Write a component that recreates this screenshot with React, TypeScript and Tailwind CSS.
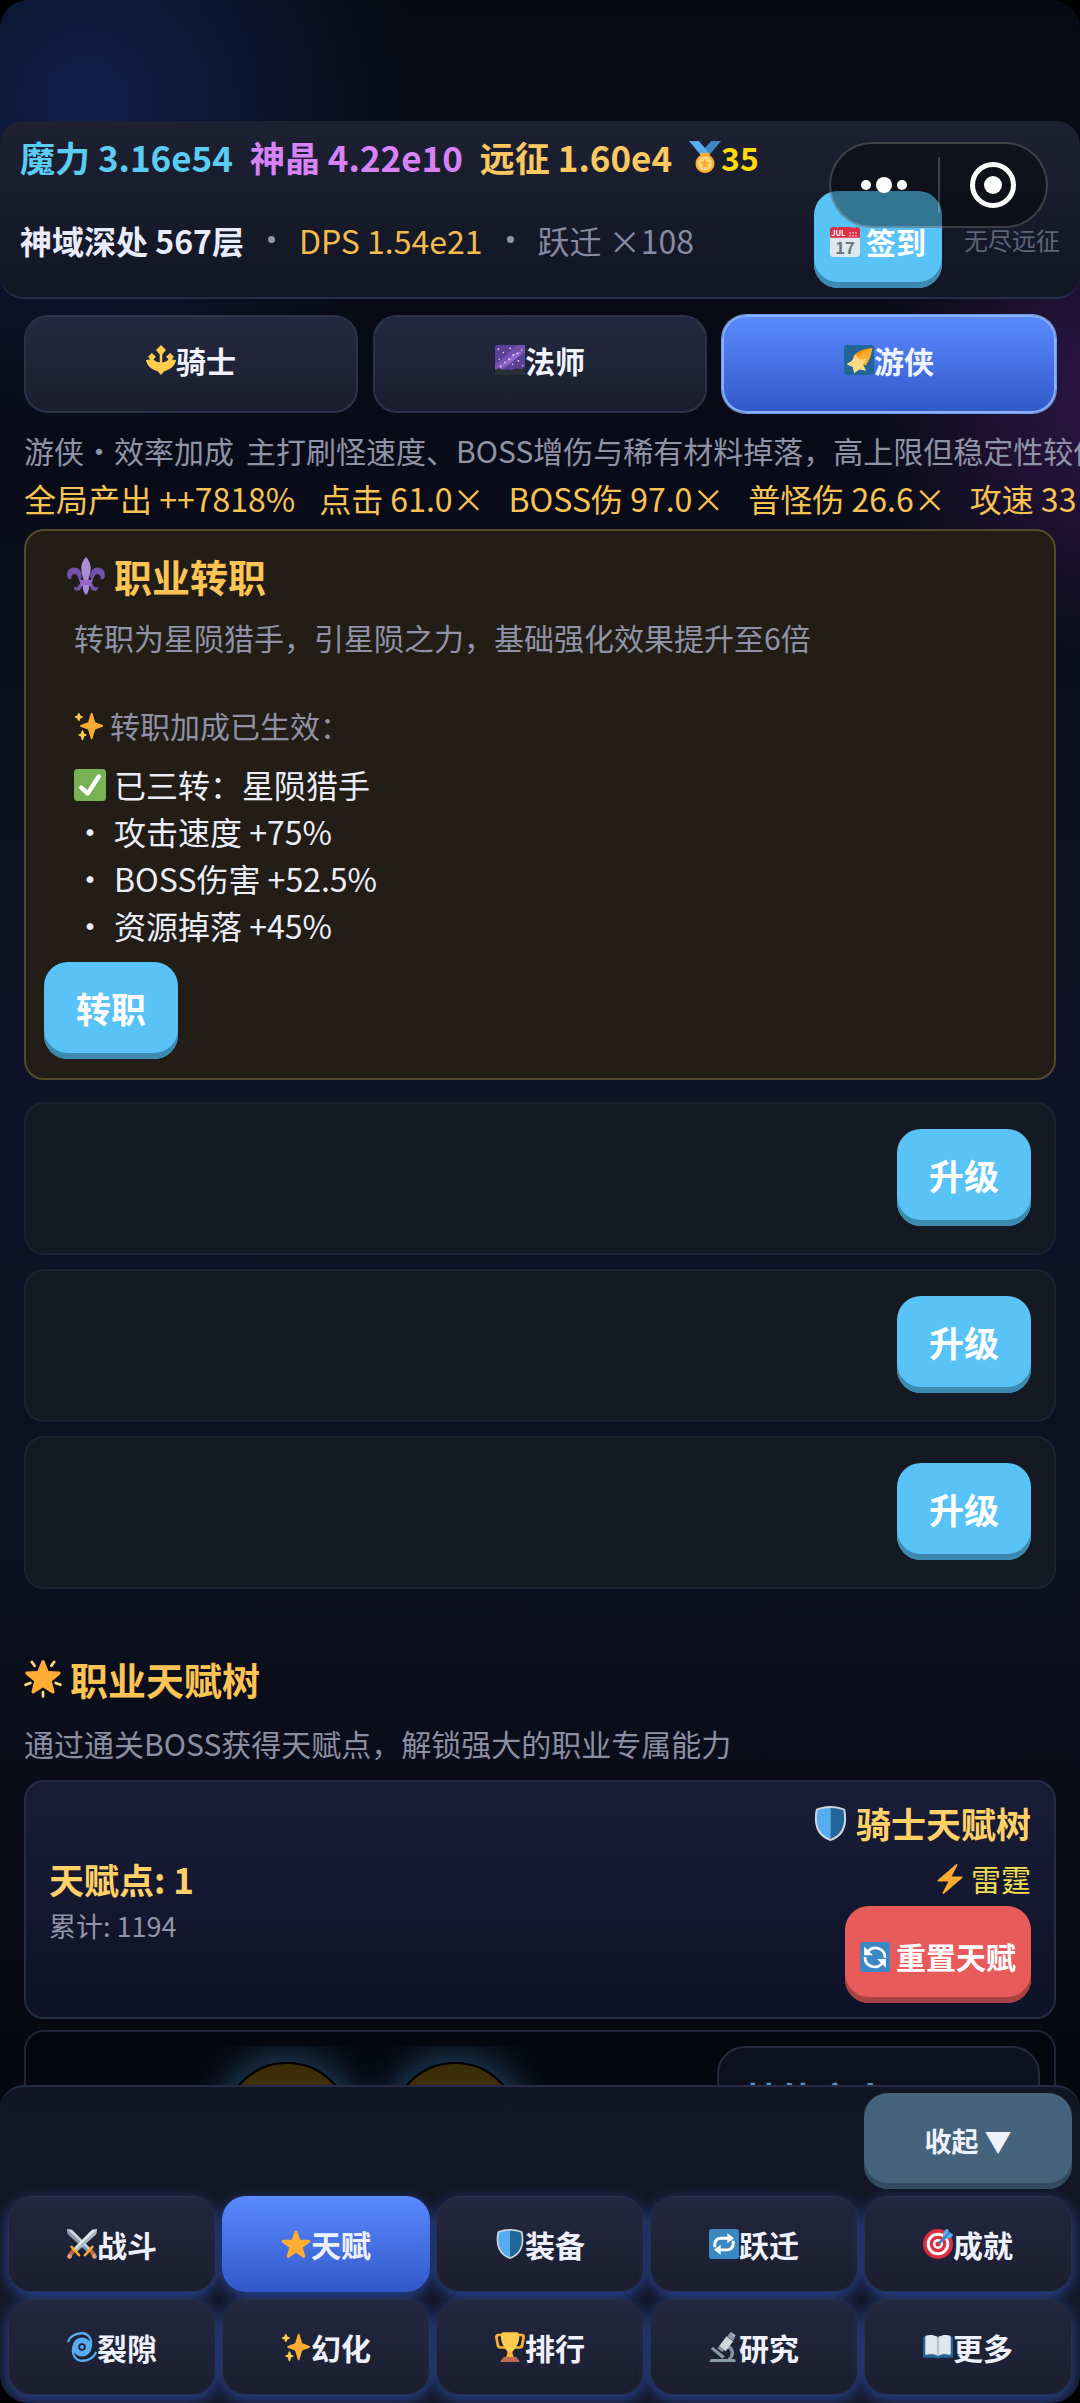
import type { ReactNode } from "react";
import clsx from "clsx";

type IconProps = { className?: string };

function Glyph({ className, children }: { className?: string; children: ReactNode }) {
  return (
    <svg viewBox="0 0 36 36" aria-hidden="true" className={clsx("h-[1em] w-[1em] shrink-0", className)}>
      {children}
    </svg>
  );
}

const MedalIcon = (p: IconProps) => (
  <Glyph {...p}>
    <path fill="#55ACEE" d="M18 8l-7-8H0l14 17 11.521-4.750z" />
    <path fill="#3B88C3" d="M25 0l-7 8 5.390 7.312 1.227-1.489L36 0z" />
    <path fill="#FFAC33" d="M23.205 16.026c.08-.217.131-.448.131-.693 0-1.104-.896-2-2-2h-6.667c-1.105 0-2 .896-2 2 0 .245.05.476.131.693-3.258 1.826-5.464 5.307-5.464 9.307C7.336 31.224 12.111 36 18.002 36s10.667-4.776 10.667-10.667c0-4-2.206-7.481-5.464-9.307z" />
    <circle fill="#FFD983" cx="18" cy="25.400" r="8" />
    <path fill="#FFAC33" d="M18 19.200l1.700 4.100 4.400.3-3.400 2.900 1.100 4.300-3.800-2.300-3.800 2.300 1.100-4.300-3.400-2.900 4.400-.3z" />
  </Glyph>
);

const CalendarIcon = (p: IconProps) => (
  <Glyph {...p}>
    <path fill="#E0E7EC" d="M36 32c0 2.209-1.791 4-4 4H4c-2.209 0-4-1.791-4-4V9c0-2.209 1.791-4 4-4h28c2.209 0 4 1.791 4 4v23z" />
    <path fill="#DD2E44" d="M4 0h4l1 2 1-2h16l1 2 1-2h1l1 2 1-2h1a4 4 0 0 1 4 4v9H0V4a4 4 0 0 1 4-4z" />
    <path fill="#F4ABBA" d="M23 6h2v2h-2zm3.500 0h2v2h-2zm3.500 0h2v2h-2zM23 9.500h2v2h-2zm3.500 0h2v2h-2zm3.500 0h2v2h-2z" />
    <text x="1.500" y="11" fontSize="9" fontWeight="700" fill="#fff">JUL</text>
    <text x="18" y="32" fontSize="20" fontWeight="700" fill="#66757F" textAnchor="middle">17</text>
  </Glyph>
);

const TridentIcon = (p: IconProps) => (
  <Glyph {...p}>
    <path fill="#FFCC4D" d="M18 0l6 6-4.500 5.500V21c3-.5 6-2 7.500-4l-3-3 5-4.500L33.500 14 31 17.500l5 .5c-1 8-8 11.500-14 13.500L18 36l-4-4.500C8 29.500 1 26 0 18l5-.5L2.500 14 7 9.500l5 4.500-3 3c1.500 2 4.500 3.500 7.500 4v-9.500L12 6z" />
  </Glyph>
);

const GalaxyIcon = (p: IconProps) => (
  <Glyph {...p}>
    <rect width="36" height="36" rx="3" fill="#5C3F96" />
    <path fill="#7450B0" d="M0 22C9 19 15 8 27 0h9v10C24 14 17 28 4 31H0z" />
    <path fill="#9266CC" d="M6 23c7-2 12-10 20-14 5-3 7-1 4 3-5 6-14 12-22 14-5 1-6-2-2-3z" />
    <g fill="#E9DDFB">
      <circle cx="4" cy="5" r="1" />
      <circle cx="10" cy="9" r=".9" />
      <circle cx="18" cy="4" r="1.100" />
      <circle cx="22" cy="12" r="1.200" />
      <circle cx="27" cy="10" r="1.100" />
      <circle cx="32" cy="6" r=".9" />
      <circle cx="17" cy="17" r="1.200" />
      <circle cx="12" cy="21" r="1" />
      <circle cx="5" cy="17" r=".9" />
      <circle cx="7" cy="26" r="1" />
      <circle cx="21" cy="23" r=".9" />
      <circle cx="28" cy="19" r="1.100" />
      <circle cx="33" cy="25" r=".9" />
    </g>
    <path fill="#292F33" d="M0 30l5-2 4 2 5-1 6 1 5-2 6 1 5-2v6a3 3 0 0 1-3 3H3a3 3 0 0 1-3-3z" />
  </Glyph>
);

const ShootingStarIcon = (p: IconProps) => (
  <Glyph {...p}>
    <rect width="36" height="36" rx="4" fill="#226699" />
    <path fill="#F4900C" d="M34 4C25 4 16 7 11 14l4 7 9 3z" />
    <path fill="#FFAC33" d="M34 4c-1 8-4 15-8 21L14 17c5-6 12-11 20-13z" />
    <path fill="#FFD983" d="M14 11l4.500 6.500 8.500-1-4 7 3.500 7.500-8-1.500L12 34l-1.500-7.500L3 23l6.500-4z" />
  </Glyph>
);

const FleurIcon = (p: IconProps) => (
  <Glyph {...p}>
    <path fill="#7450A8" d="M14 19c0-6-3-9-7-9-4.500 0-7 3.500-7 7 0 3 2 4.500 4 4 0-3 1-5 3-5 3 0 4 4 5 8zM22 19c0-6 3-9 7-9 4.500 0 7 3.500 7 7 0 3-2 4.500-4 4 0-3-1-5-3-5-3 0-4 4-5 8z" />
    <path fill="#7450A8" d="M15 25c-1 5-3 7-5 7-2.500 0-4-2-3-4 2 2 4 0 6-4zm6 0c1 5 3 7 5 7 2.500 0 4-2 3-4-2 2-4 0-6-4z" />
    <path fill="#AA8DD8" d="M18 0c3 3 4.500 7 4.500 11 0 5-2 8-2.500 12h-4c-.5-4-2.500-7-2.500-12C13.500 7 15 3 18 0z" />
    <path fill="#9266CC" d="M12 21.500h12l-1 6H13z" />
    <path fill="#AA8DD8" d="M15 27h6c0 4-1 7-3 9-2-2-3-5-3-9z" />
  </Glyph>
);

const SparklesIcon = (p: IconProps) => (
  <Glyph {...p}>
    <path fill="#FFAC33" d="M34.347 16.893l-8.899-3.294-3.323-10.891c-.128-.42-.517-.708-.956-.708-.439 0-.828.288-.956.708l-3.322 10.891-8.900 3.294c-.393.146-.653.519-.653.938 0 .418.260.793.653.938l8.895 3.293 3.324 11.223c.126.424.516.715.959.715.442 0 .833-.291.959-.716l3.324-11.223 8.896-3.293c.391-.144.652-.518.652-.937 0-.418-.261-.792-.653-.938z" />
    <path fill="#FFCC4D" d="M14.347 27.894l-2.314-.856-.9-3.300c-.118-.436-.513-.738-.964-.738-.451 0-.846.302-.965.737l-.9 3.300-2.313.856c-.393.146-.653.520-.653.938 0 .418.260.793.653.938l2.301.853.907 3.622c.112.444.511.756.970.756.459 0 .858-.312.970-.757l.907-3.622 2.301-.853c.393-.144.653-.519.653-.937 0-.418-.260-.793-.653-.937zM10.009 6.231l-2.364-.875-.876-2.365c-.145-.393-.519-.653-.938-.653-.418 0-.792.260-.938.653l-.875 2.365-2.365.875c-.393.146-.653.520-.653.938 0 .418.260.793.653.938l2.365.875.875 2.365c.146.393.520.653.938.653.418 0 .792-.260.938-.653l.875-2.365 2.365-.875c.393-.146.653-.520.653-.938 0-.418-.260-.792-.653-.938z" />
  </Glyph>
);

const CheckIcon = (p: IconProps) => (
  <Glyph {...p}>
    <rect width="36" height="36" rx="4" fill="#77B255" />
    <path fill="#FFF" d="M29.280 6.362a2.502 2.502 0 0 0-3.458.736L14.936 23.877l-5.029-4.650a2.500 2.500 0 1 0-3.394 3.671l7.209 6.666c.480.445 1.090.665 1.696.665.673 0 1.534-.282 2.099-1.139.332-.506 12.500-19.270 12.500-19.270a2.500 2.500 0 0 0-.737-3.458z" />
  </Glyph>
);

const GlowStarIcon = (p: IconProps) => (
  <Glyph {...p}>
    <path fill="#FFAC33" d="M18 0c.7 0 1.200.4 1.500 1.100l3.700 9.300 10 .6c1.500.1 2 1.800.9 2.700l-7.700 6.400 2.500 9.700c.3 1.400-1.100 2.400-2.300 1.600L18 26.100l-8.600 5.300c-1.200.8-2.600-.2-2.300-1.600l2.500-9.700-7.700-6.400c-1.100-.9-.6-2.600.9-2.700l10-.6 3.700-9.300C16.800.4 17.300 0 18 0z" />
    <g stroke="#FFD983" strokeWidth="2.600" strokeLinecap="round">
      <path d="M7.500 1.800l2.500 3.700M28.500 1.800L26 5.500M1.500 23.500l4.500-1.800M34.500 23.500L30 21.700M18 30.500v4" />
    </g>
  </Glyph>
);

const ShieldIcon = (p: IconProps) => (
  <Glyph {...p}>
    <path fill="#CCD6DD" d="M33 3c-7-3-15-3-15-3S10 0 3 3C0 18 3 31 18 36c15-5 18-18 15-33z" />
    <path fill="#55ACEE" d="M18 33.884C6.412 29.729 1.961 19.831 4.760 4.444 11.063 2.029 17.928 2 18 2z" />
    <path fill="#226699" d="M31.240 4.443C24.963 2.004 18.137 2 18.070 2H18v31.884c11.589-4.155 16.040-14.053 13.240-29.441z" />
  </Glyph>
);

const BoltIcon = (p: IconProps) => (
  <Glyph {...p}>
    <path fill="#FFAC33" d="M32.938 15.651C32.792 15.260 32.418 15 32 15H19.925L26.890 1.458c.219-.426.106-.947-.271-1.243C26.437.071 26.218 0 26 0c-.233 0-.466.082-.653.243L18 6.588 3.347 19.243c-.316.273-.430.714-.284 1.105S3.582 21 4 21h12.075L9.110 34.542c-.219.426-.106.947.271 1.243.182.144.401.215.619.215.233 0 .466-.082.653-.243L18 29.412l14.653-12.655c.317-.273.430-.714.285-1.106z" />
  </Glyph>
);

const ResetIcon = (p: IconProps) => (
  <Glyph {...p}>
    <rect width="36" height="36" rx="4" fill="#3B88C3" />
    <g fill="none" stroke="#fff" strokeWidth="3.200">
      <path d="M9.500 11.500A11.500 11.500 0 0 1 30 19" />
      <path d="M26.500 25.500A11.500 11.500 0 0 1 6 18" />
    </g>
    <path fill="#fff" d="M5 5.500V16h10.500zM31 31V20.500H20.500z" />
  </Glyph>
);

const RepeatIcon = (p: IconProps) => (
  <Glyph {...p}>
    <rect width="36" height="36" rx="4" fill="#3B88C3" />
    <g fill="none" stroke="#fff" strokeWidth="3.500">
      <path d="M7 22v-4a7 7 0 0 1 7-7h9" />
      <path d="M29 14v4a7 7 0 0 1-7 7h-9" />
    </g>
    <path fill="#fff" d="M22 5v12l8-6zM14 31V19l-8 6z" />
  </Glyph>
);

const SwordsIcon = (p: IconProps) => (
  <Glyph {...p}>
    <path fill="#CCD6DD" d="M0 0l6 1 22 22-4 4L1 6z" />
    <path fill="#8899A6" d="M0 0l26 25-2 2L1 6z" />
    <path fill="#E1E8ED" d="M36 0l-6 1L8 23l4 4L35 6z" />
    <path fill="#AAB8C2" d="M36 0L10 25l2 2L35 6z" />
    <path fill="#BE6B3F" d="M26 26l3-3 6 7-4 4zM10 26l-3-3-6 7 4 4z" />
    <circle cx="33" cy="33" r="2.800" fill="#DA9F83" />
    <circle cx="3" cy="33" r="2.800" fill="#DA9F83" />
    <path stroke="#FFAC33" strokeWidth="3" strokeLinecap="round" d="M21.500 31.500l9-10M14.500 31.500l-9-10" />
  </Glyph>
);

const StarIcon = (p: IconProps) => (
  <Glyph {...p}>
    <path fill="#FFAC33" d="M27.287 34.627c-.404 0-.806-.124-1.152-.371L18 28.422l-8.135 5.834a1.970 1.970 0 0 1-2.312-.008 1.971 1.971 0 0 1-.721-2.194l3.034-9.792-8.062-5.681a1.980 1.980 0 0 1-.708-2.203 1.978 1.978 0 0 1 1.866-1.363L12.947 13l3.179-9.549a1.976 1.976 0 0 1 3.749 0L23 13l10.036.015a1.975 1.975 0 0 1 1.159 3.566l-8.062 5.681 3.034 9.792a1.970 1.970 0 0 1-.720 2.194 1.957 1.957 0 0 1-1.160.379z" />
  </Glyph>
);

const TargetIcon = (p: IconProps) => (
  <Glyph {...p}>
    <circle fill="#DD2E44" cx="18" cy="18" r="18" />
    <circle fill="#FFF" cx="18" cy="18" r="13.500" />
    <circle fill="#DD2E44" cx="18" cy="18" r="10" />
    <circle fill="#FFF" cx="18" cy="18" r="6" />
    <circle fill="#DD2E44" cx="18" cy="18" r="3" />
    <path fill="#55ACEE" d="M24.016 6.981c-.403 2.079 0 4.691 0 4.691l7.054-7.388c.291-1.454-.528-3.932-1.718-4.238-1.190-.306-4.079.803-5.336 6.935zm5.003 5.003c-2.079.403-4.691 0-4.691 0l7.388-7.054c1.454-.291 3.932.528 4.238 1.718.306 1.190-.803 4.079-6.935 5.336z" />
    <path fill="#3A87C2" d="M32.798 4.485L21.176 17.587c-.362.362-1.673.882-2.510.046-.836-.836-.419-2.080-.057-2.443L31.815 3.501s.676-.635 1.159-.152-.176 1.136-.176 1.136z" />
  </Glyph>
);

const CycloneIcon = (p: IconProps) => (
  <Glyph {...p}>
    <circle cx="18" cy="18" r="8" fill="none" stroke="#55ACEE" strokeWidth="7" />
    <circle cx="18" cy="18" r="2.400" fill="#55ACEE" />
    <g fill="none" stroke="#55ACEE" strokeWidth="2.800" strokeLinecap="round">
      <path d="M1.500 11C4 5 11 1.500 18 1.500c8 0 13 8 10 17" />
      <path d="M34.500 25c-2.500 6-9.500 9.500-16.500 9.500-8 0-13-8-10-17" />
    </g>
  </Glyph>
);

const TrophyIcon = (p: IconProps) => (
  <Glyph {...p}>
    <path fill="#FFAC33" d="M5.123 5h6C12.227 5 13 4.896 13 6V4c0-1.104-.773-2-1.877-2h-8c-2 0-3.583 2.125-3 5 0 0 1.791 9.375 1.917 9.958C2.373 18.500 4.164 20 6.081 20h6.958c1.105 0-.039-1.896-.039-3v-2c0 1.104-.773 2-1.877 2h-4c-1.104 0-1.833-1.042-2-2S3.539 7.667 3.539 7.667C3.206 5.750 4.018 5 5.123 5zm25.812 0h-6C23.831 5 22 4.896 22 6V4c0-1.104 1.831-2 2.935-2h8c2 0 3.584 2.125 3 5 0 0-1.633 9.419-1.771 10-.354 1.500-2.042 3-4 3h-7.146C21.914 20 22 18.104 22 17v-2c0 1.104 1.831 2 2.935 2h4c1.104 0 1.834-1.042 2-2s1.584-7.333 1.584-7.333C32.851 5.750 32.040 5 30.935 5zM20.832 22c0-6.958-2.709 0-2.709 0s-3-6.958-3 0-3.291 10-3.291 10h12.292c-.001 0-3.292-3.042-3.292-10z" />
    <path fill="#FFCC4D" d="M29.123 6.577c0 6.775-6.770 18.192-11 18.192-4.231 0-11-11.417-11-18.192 0-5.195 1-6.319 3-6.319 1.374 0 6.025-.027 8-.027l7-.001c2.917-.001 4 .684 4 6.347z" />
    <path fill="#C1694F" d="M27 33c0 1.104.227 2-.877 2h-16C9.018 35 9 34.104 9 33v-1c0-1.104 1.164-2 2.206-2h13.917c1.042 0 1.877.896 1.877 2v1zM7 36v-1.600C7 33.600 7.700 33 8.500 33h19.200c.8 0 1.300.6 1.300 1.400V36z" />
  </Glyph>
);

const MicroscopeIcon = (p: IconProps) => (
  <Glyph {...p}>
    <path fill="#8899A6" d="M22 15c6 2 8 6 8 10 0 5-3 8-6 9h-4c4-2 6-5 6-9 0-3-2-5-6-6z" />
    <path fill="#8899A6" d="M3 32.500h27a2 2 0 0 1 2 2V36H1v-1.500a2 2 0 0 1 2-2zM2 20l3-2 14 11-3 3z" />
    <path fill="#CCD6DD" d="M21 5l8 6-9 12-8-6z" />
    <path fill="#8899A6" d="M24 2l7 5-2 3.500-7-5zM12 17.500l6 4.500-2 2-6-4.500z" />
    <path fill="#AAB8C2" d="M26 0l6 4-1.500 2.500-6-4z" />
  </Glyph>
);

const BookIcon = (p: IconProps) => (
  <Glyph {...p}>
    <path fill="#226699" d="M0 8a3 3 0 0 1 3-3h30a3 3 0 0 1 3 3v21a2 2 0 0 1-2 2H20l-2 1-2-1H2a2 2 0 0 1-2-2z" />
    <path fill="#CCD6DD" d="M3 6c5-2 11-2 15 1 4-3 10-3 15-1v22c-5-2-11-2-15 1-4-3-10-3-15-1z" />
    <path fill="#E1E8ED" d="M3 4.500c5-1.500 10-1 13.500 1V27C13 25 8 25 3 26.500zM33 4.500c-5-1.500-10-1-13.500 1V27c3.500-2 8.500-2 13.500-.500z" />
    <path stroke="#99AAB5" strokeWidth="1" d="M18 7v22" />
  </Glyph>
);

const classes = [
  { name: "骑士", icon: TridentIcon },
  { name: "法师", icon: GalaxyIcon },
  { name: "游侠", icon: ShootingStarIcon, active: true },
];

const stats = ["全局产出 ++7818%", "点击 61.0×", "BOSS伤 97.0×", "普怪伤 26.6×", "攻速 33"];

const bonuses = ["攻击速度 +75%", "BOSS伤害 +52.5%", "资源掉落 +45%"];

const skills = ["skill-1", "skill-2", "skill-3"];

const navItems = [
  { label: "战斗", icon: SwordsIcon },
  { label: "天赋", icon: StarIcon, active: true },
  { label: "装备", icon: ShieldIcon },
  { label: "跃迁", icon: RepeatIcon },
  { label: "成就", icon: TargetIcon },
  { label: "裂隙", icon: CycloneIcon },
  { label: "幻化", icon: SparklesIcon },
  { label: "排行", icon: TrophyIcon },
  { label: "研究", icon: MicroscopeIcon },
  { label: "更多", icon: BookIcon },
];

function ActionButton({ className, children }: { className?: string; children: ReactNode }) {
  return (
    <button
      type="button"
      className={clsx("flex h-[97px] items-center justify-center rounded-3xl font-bold text-white", className)}
    >
      {children}
    </button>
  );
}

const skyButton = "bg-[#59c3f7] shadow-[inset_0_-6px_0_#3d8ab0]";

function Header() {
  return (
    <header className="rounded-3xl border-b-2 border-[#272e4b] bg-linear-to-b from-[#1d2133] to-[#121522] px-5 pt-[10px] pb-[9px]">
      <div className="flex items-center gap-[17px] text-[35px] leading-[52px] font-bold whitespace-nowrap">
        <span className="text-[#5bcdf3]">魔力 3.16e54</span>
        <span className="text-[#d583f7]">神晶 4.22e10</span>
        <span className="text-[#fbc862]">远征 1.60e4</span>
        <span className="flex items-center text-[32px] text-[#ffdb0a]">
          <MedalIcon />
          35
        </span>
      </div>
      <div className="mt-2 flex items-center justify-between whitespace-nowrap">
        <div className="flex items-center gap-6 text-[32px] leading-[48px]">
          <span className="font-bold text-[#e8ebfa]">神域深处 567层</span>
          <span className="size-[7px] rounded-full bg-[#9196a8]" />
          <span className="text-[#f3bc4c]">DPS 1.54e21</span>
          <span className="size-[7px] rounded-full bg-[#9196a8]" />
          <span className="text-[#868ba0]">跃迁 ×108</span>
        </div>
        <div className="flex items-center gap-[22px]">
          <ActionButton className={clsx(skyButton, "gap-[6px] px-4 pt-1 text-[30px]")}>
            <CalendarIcon />
            签到
          </ActionButton>
          <span className="text-2xl text-[#5f6479]">无尽远征</span>
        </div>
      </div>
    </header>
  );
}

// Host app capsule, floats above the page header
function Capsule() {
  return (
    <div className="absolute top-[142px] right-8 flex h-[86px] w-[219px] items-center rounded-full border-2 border-white/20 bg-black/40">
      <button type="button" aria-label="更多" className="flex flex-1 items-center justify-center gap-[5px]">
        <span className="size-[10px] rounded-full bg-white" />
        <span className="size-4 rounded-full bg-white" />
        <span className="size-[10px] rounded-full bg-white" />
      </button>
      <span className="h-14 w-[2px] bg-white/20" />
      <button type="button" aria-label="关闭" className="flex flex-1 items-center justify-center">
        <span className="flex size-[46px] items-center justify-center rounded-full border-[5px] border-white">
          <span className="size-[18px] rounded-full bg-white" />
        </span>
      </button>
    </div>
  );
}

function ClassTabs() {
  return (
    <div className="grid grid-cols-3 gap-[15px]">
      {classes.map(({ name, icon: Icon, active }) => (
        <button
          key={name}
          type="button"
          className={clsx(
            "flex h-[98px] items-center justify-center rounded-3xl border-2 pb-2 text-[30px] font-bold",
            active
              ? "border-[#8ab0f5] bg-linear-to-b from-[#5a8aff] to-[#3259ca] text-[#f0f4ff] ring-1 ring-[#6f9ceb]"
              : "border-[#2c3349] bg-linear-to-b from-[#232940] to-[#1c1e2f] text-[#f0f2fd]"
          )}
        >
          <Icon />
          {name}
        </button>
      ))}
    </div>
  );
}

function TransferCard() {
  return (
    <section className="mt-[7px] rounded-[20px] border-2 border-[#544a2c] bg-[#221e17] px-[18px] pt-[18px] pb-[19px]">
      <div className="px-[30px]">
        <h2 className="-ml-[7px] flex items-center gap-[9px] text-[38px] leading-[54px] font-bold text-[#fdc455]">
          <FleurIcon />
          职业转职
        </h2>
        <p className="mt-3 text-[30px] leading-[45px] text-[#8f93a5]">
          转职为星陨猎手，引星陨之力，基础强化效果提升至6倍
        </p>
        <p className="mt-[43px] flex items-center gap-[6px] text-[30px] leading-[45px] text-[#8f93a5]">
          <SparklesIcon />
          转职加成已生效：
        </p>
        <div className="mt-[13px] text-[32px] leading-[47px] text-[#ebedf7]">
          <p className="flex items-center gap-2">
            <CheckIcon />
            已三转：星陨猎手
          </p>
          <ul>
            {bonuses.map((bonus) => (
              <li key={bonus} className="flex gap-2">
                <span>・</span>
                {bonus}
              </li>
            ))}
          </ul>
        </div>
      </div>
      <ActionButton className={clsx(skyButton, "mt-[13px] px-8 pb-1 text-[35px]")}>转职</ActionButton>
    </section>
  );
}

function TalentSummary() {
  return (
    <section className="mt-[14px] flex items-center justify-between rounded-[20px] border-2 border-[#262c44] bg-linear-to-b from-[#1a1d38] to-[#0e1227] px-[23px] py-[14px]">
      <div>
        <p className="text-[35px] leading-[52px] font-bold text-[#ffd166]">天赋点: 1</p>
        <p className="text-[27px] leading-[42px] text-[#9195a9]">累计: 1194</p>
      </div>
      <div className="flex flex-col items-end">
        <h3 className="flex items-center gap-2 text-[35px] leading-[54px] font-bold text-[#ffd166]">
          <ShieldIcon />
          骑士天赋树
        </h3>
        <p className="mt-[6px] flex items-center gap-[6px] text-[30px] leading-[45px] text-[#f0dc55]">
          <BoltIcon />
          雷霆
        </p>
        <ActionButton className="mt-[5px] gap-[6px] bg-[#e95b5b] px-[15px] pt-1 text-[30px] shadow-[inset_0_-6px_0_#a64244]">
          <ResetIcon />
          重置天赋
        </ActionButton>
      </div>
    </section>
  );
}

function TalentTree() {
  return (
    <section className="mt-[11px] flex rounded-[20px] border-2 border-[#202436] bg-[#05070e] p-[14px]">
      <div className="mr-4 flex flex-1 justify-center gap-10 overflow-hidden pt-4">
        {["a", "b"].map((node) => (
          <button
            key={node}
            type="button"
            aria-label="天赋节点"
            className="size-32 rounded-full border-2 border-black bg-linear-to-b from-[#3a2b08] to-[#5a4310] shadow-[0_0_45px_#2c5c86]"
          />
        ))}
      </div>
      <aside className="h-[300px] w-[323px] rounded-[28px] border-2 border-[#262a3c] bg-linear-to-b from-[#0e1220] to-[#070a12] px-[26px] pt-[30px]">
        <h3 className="text-4xl leading-10 font-bold text-[#5b93c4]">技能方向</h3>
      </aside>
    </section>
  );
}

function BottomNav() {
  return (
    <nav className="shrink-0 rounded-3xl border-t-2 border-[#262c48] bg-linear-to-b from-[#121522] to-[#161b2c] px-2 pt-[6px] pb-2">
      <div className="grid grid-cols-5 gap-x-[6px] gap-y-[7px]">
        <button
          type="button"
          className="col-start-5 flex h-24 items-center justify-center rounded-3xl bg-[#46637e] text-[27px] font-bold text-[#eef2fb] shadow-[inset_0_-6px_0_#324a60]"
        >
          收起 ▼
        </button>
        {navItems.map(({ label, icon: Icon, active }, i) => (
          <button
            key={label}
            type="button"
            className={clsx(
              "flex h-24 items-center justify-center rounded-3xl text-[30px] font-bold text-[#eef1fc] shadow-[0_4px_14px_rgba(55,100,220,0.6)]",
              i === 0 && "col-start-1",
              active
                ? "bg-linear-to-b from-[#5a8aff] to-[#3259ca]"
                : "border border-[#272f4b] bg-linear-to-b from-[#232840] to-[#1b1e2e]"
            )}
          >
            <Icon />
            {label}
          </button>
        ))}
      </div>
    </nav>
  );
}

export default function App() {
  return (
    <div className="bg-black font-['Noto_Sans_CJK_SC',sans-serif]">
      <div className="relative flex h-screen flex-col overflow-hidden rounded-[28px] bg-[radial-gradient(circle_330px_at_8%_100px,#10204a,transparent),radial-gradient(circle_260px_at_104%_400px,#31164a,transparent),linear-gradient(#070a13,#090c18_20%,#101328_46%,#0d1020_65%,#07080f_85%)] pt-[121px]">
        <Header />
        <Capsule />
        <main className="min-h-0 flex-1 overflow-hidden px-6 pt-4">
          <ClassTabs />
          <p className="mt-[15px] flex gap-3 text-[30px] leading-[45px] whitespace-nowrap text-[#8f93a6]">
            <span>游侠・效率加成</span>
            <span>主打刷怪速度、BOSS增伤与稀有材料掉落，高上限但稳定性较低</span>
          </p>
          <div className="mt-px flex gap-6 text-[32px] leading-[48px] whitespace-nowrap text-[#f9c353]">
            {stats.map((stat) => (
              <span key={stat}>{stat}</span>
            ))}
          </div>
          <TransferCard />
          <div className="mt-[22px] flex flex-col gap-[14px]">
            {skills.map((skill) => (
              <div
                key={skill}
                className="flex justify-end rounded-[20px] border-2 border-[#1d2130] bg-[#151924] px-[23px] pt-[25px] pb-[27px]"
              >
                <ActionButton className={clsx(skyButton, "px-8 pb-1 text-[35px]")}>升级</ActionButton>
              </div>
            ))}
          </div>
          <h2 className="mt-[63px] flex items-center gap-2 text-[38px] leading-[54px] font-bold text-[#fdc455]">
            <GlowStarIcon />
            职业天赋树
          </h2>
          <p className="mt-[15px] text-[30px] leading-[45px] text-[#8b8fa2]">
            通过通关BOSS获得天赋点，解锁强大的职业专属能力
          </p>
          <TalentSummary />
          <TalentTree />
        </main>
        <BottomNav />
      </div>
    </div>
  );
}
